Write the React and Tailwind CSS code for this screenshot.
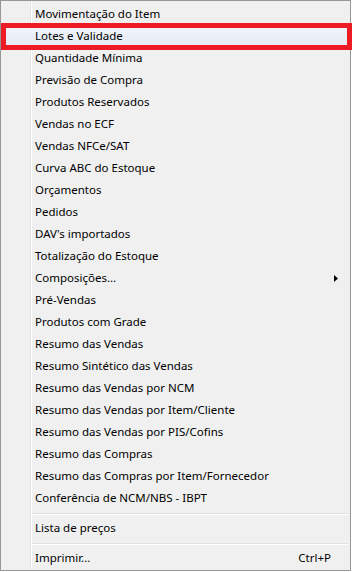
import React from "react";

const items = [
  { label: "Movimentação do Item" },
  { label: "Lotes e Validade", active: true },
  { label: "Quantidade Mínima" },
  { label: "Previsão de Compra" },
  { label: "Produtos Reservados" },
  { label: "Vendas no ECF" },
  { label: "Vendas NFCe/SAT" },
  { label: "Curva ABC do Estoque" },
  { label: "Orçamentos" },
  { label: "Pedidos" },
  { label: "DAV's importados" },
  { label: "Totalização do Estoque" },
  { label: "Composições...", submenu: true },
  { label: "Pré-Vendas" },
  { label: "Produtos com Grade" },
  { label: "Resumo das Vendas" },
  { label: "Resumo Sintético das Vendas" },
  { label: "Resumo das Vendas por NCM" },
  { label: "Resumo das Vendas por Item/Cliente" },
  { label: "Resumo das Vendas por PIS/Cofins" },
  { label: "Resumo das Compras" },
  { label: "Resumo das Compras por Item/Fornecedor" },
  { label: "Conferência de NCM/NBS - IBPT" },
];

const MenuRow = ({ label, active, submenu, shortcut }) => (
  <div
    className={`h-[22px] flex items-center pl-[34px] pr-[12px] ${
      active ? "bg-gradient-to-b from-[#f1f4fa] to-[#e5ebf5]" : ""
    }`}
  >
    <span className="flex-1 whitespace-nowrap">{label}</span>
    {shortcut && <span className="mr-[7px]">{shortcut}</span>}
    {submenu && (
      <svg width="4" height="7" viewBox="0 0 4 7">
        <path d="M0 0 L4 3.5 L0 7 Z" fill="#000" />
      </svg>
    )}
  </div>
);

const Separator = () => (
  <div className="h-[8px] pt-[4px] ml-[31px] mr-[2px]">
    <div className="h-px bg-[#e0e0e0]" />
    <div className="h-px bg-white" />
  </div>
);

export default function App() {
  return (
    <div className="w-[352px] h-[572px] bg-white">
      <div
        className="relative w-[351px] h-[571px] bg-[#f0f0f0] border border-[#979797] text-[11.5px] text-black"
        style={{ fontFamily: '"Noto Sans", "Liberation Sans", sans-serif' }}
      >
        {/* gutter line */}
        <div className="absolute top-[1px] bottom-[1px] left-[29px] w-[2px] flex">
          <div className="w-px bg-[#e2e3e3]" />
          <div className="w-px bg-white" />
        </div>

        <div className="relative pt-[2px]">
          {items.map((it, i) => (
            <MenuRow key={i} {...it} />
          ))}
          <Separator />
          <MenuRow label="Lista de preços" />
          <Separator />
          <MenuRow label="Imprimir..." shortcut="Ctrl+P" />
        </div>

        {/* red annotation box */}
        <div className="absolute left-0 top-[22px] w-[351px] h-[27px] border-[5px] border-[#ed1c24]" />
      </div>
    </div>
  );
}
